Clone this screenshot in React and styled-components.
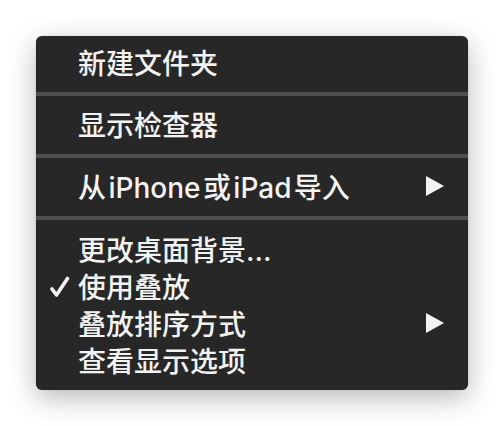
import React from 'react';
import styled, { createGlobalStyle } from 'styled-components';

const GlobalStyle = createGlobalStyle`
html, body {
  margin: 0;
  padding: 0;
  background: #ffffff;
}
body {
  font-family: Inter, "Noto Sans CJK SC", sans-serif;
}
`

const Page = styled.div`
padding: 36px;
`

const Menu = styled.div`
width: 432px;
box-sizing: border-box;
padding: 7px 0 11px;
background: #272727;
border-radius: 6px;
box-shadow: 0 8px 28px rgba(0, 0, 0, 0.28), 0 0 1px rgba(0, 0, 0, 0.4);
display: flex;
flex-direction: column;
`

const Item = styled.div`
position: relative;
display: flex;
align-items: center;
height: 37.3px;
padding: 0 24px 0 42px;
color: #f2f2f2;
font-size: 28px;
font-weight: 500;
word-spacing: -0.18em;
white-space: nowrap;
`

const Label = styled.span`
flex: 1;
`

const Check = styled.svg`
position: absolute;
left: 12px;
top: 50%;
margin-top: -11px;
width: 22px;
height: 22px;
`

const Arrow = styled.svg`
width: 18px;
height: 20px;
`

const Separator = styled.div`
height: 4px;
background: #4f4f4f;
margin: 11.5px 0 9.5px;
`

const CheckMark = () => (
  <Check viewBox="0 0 22 22">
    <polyline points="4,14 8.5,20 19.5,3.5" fill="none" stroke="#f2f2f2" strokeWidth="3.6" strokeLinecap="round" strokeLinejoin="round" />
  </Check>
)

const SubArrow = () => (
  <Arrow viewBox="0 0 18 20">
    <polygon points="0,0 18,10 0,20" fill="#f2f2f2" />
  </Arrow>
)

const MenuItem = ({ children, checked, submenu }) => (
  <Item>
    {checked && <CheckMark />}
    <Label>{children}</Label>
    {submenu && <SubArrow />}
  </Item>
)

const App = () => {
  return (
    <Page>
      <GlobalStyle />
      <Menu>
        <MenuItem>新建文件夹</MenuItem>
        <Separator />
        <MenuItem>显示检查器</MenuItem>
        <Separator />
        <MenuItem submenu>从 iPhone 或 iPad 导入</MenuItem>
        <Separator />
        <MenuItem>更改桌面背景…</MenuItem>
        <MenuItem checked>使用叠放</MenuItem>
        <MenuItem submenu>叠放排序方式</MenuItem>
        <MenuItem>查看显示选项</MenuItem>
      </Menu>
    </Page>
  )
}

export default App;
